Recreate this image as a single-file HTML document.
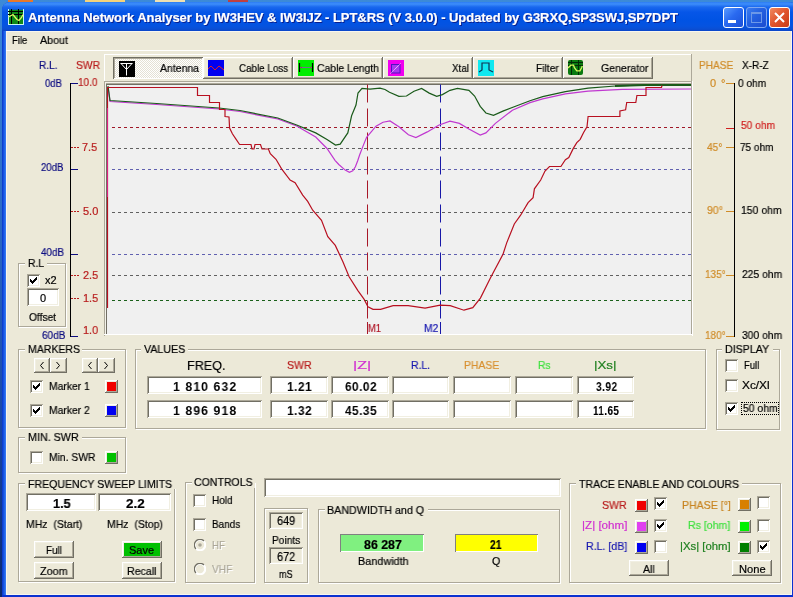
<!DOCTYPE html><html><head><meta charset="utf-8"><style>
html,body{margin:0;padding:0}
body{width:793px;height:597px;overflow:hidden;position:relative;background:linear-gradient(to bottom,#3C8AD8 0px,#2C6CC8 200px,#1A48A8 420px,#0A2870 597px)}
.a{position:absolute}
.t{position:absolute;white-space:nowrap;will-change:transform;-webkit-text-stroke:0.2px currentColor}
</style></head><body>

<div class="a" style="left:8px;top:0px;width:25px;height:2px;background:#E8782A"></div>
<div class="a" style="left:85px;top:0px;width:40px;height:2px;background:#F4D27A"></div>
<div class="a" style="left:155px;top:0px;width:30px;height:2px;background:#F0E0B0"></div>
<div class="a" style="left:228px;top:0px;width:20px;height:2px;background:#C04040"></div>
<div class="a" style="left:2px;top:2px;width:795px;height:600px;background:#0A3FD8;border-radius:8px 8px 0 0"></div>
<div class="a" style="left:2px;top:2px;width:795px;height:29px;border-radius:8px 8px 0 0;background:linear-gradient(to bottom,#2C7CF4 0px,#3D8EFB 2px,#1A68EE 5px,#0656E8 10px,#0053E4 18px,#0553E0 24px,#0A4FD4 27px,#0A45C8 29px)"></div>
<div class="a" style="left:2px;top:31px;width:4px;height:570px;background:linear-gradient(to right,#0834C8,#1E62EC 60%,#3C7FF0)"></div>
<div class="a" style="left:792px;top:31px;width:5px;height:570px;background:#0A32D0"></div>
<div class="a" style="left:2px;top:595px;width:795px;height:4px;background:#0A32D0"></div>
<div class="a" style="left:6px;top:31px;width:786px;height:564px;background:#ECE9D8"></div>
<div class="a" style="left:791px;top:31px;width:1px;height:564px;background:#F6F6F0"></div>
<div class="a" style="left:6px;top:594px;width:786px;height:1px;background:#F6F6F0"></div>
<div class="a" style="left:6px;top:31px;width:784px;height:1px;background:#F8F6EE"></div>
<div class="a" style="left:6px;top:31px;width:1px;height:564px;background:#F8F6EE"></div>
<svg class="a" style="left:8px;top:9px" width="16" height="16" viewBox="0 0 16 16">
<rect x="0" y="0" width="16" height="16" fill="#C8F4F0"/>
<rect x="1" y="1" width="14" height="14" fill="#108A18"/>
<rect x="1" y="0" width="14" height="1" fill="#0A60C0"/>
<path d="M0 2.5H15M0 5.5H15M3.5 0V15M10.5 0V15" stroke="#000" stroke-width="1"/>
<path d="M0.5 8L5 5.5L6.5 7.5L9 10.5L11 11.5L13.5 8.5L15 5.5" stroke="#E0F860" stroke-width="1.3" fill="none"/>
</svg>
<div class="t" style="left:28px;top:11px;font:bold 13px/13px 'Liberation Sans',sans-serif;color:#fff;text-shadow:1px 1px 0 #0A1E8C;letter-spacing:-0.05px">Antenna Network Analyser by IW3HEV &amp; IW3IJZ - LPT&amp;RS (V 3.0.0) - Updated by G3RXQ,SP3SWJ,SP7DPT</div>
<div class="a" style="left:723px;top:7px;width:21px;height:21px;box-sizing:border-box;border:1px solid #fff;border-radius:3px;background:linear-gradient(135deg,#5A9CFF 0%,#2A6AF0 45%,#1A50D8 100%)"></div>
<div class="a" style="left:746px;top:7px;width:21px;height:21px;box-sizing:border-box;border:1px solid #7FA8F0;border-radius:3px;background:linear-gradient(135deg,#3A7CF0 0%,#2460E0 45%,#1A4CD0 100%)"></div>
<div class="a" style="left:728px;top:20px;width:8px;height:3px;background:#fff"></div>
<div class="a" style="left:751px;top:12px;width:11px;height:11px;box-sizing:border-box;border:1px solid #6C98E8;border-top:2px solid #6C98E8"></div>
<div class="a" style="left:769px;top:7px;width:21px;height:21px;box-sizing:border-box;border:1px solid #fff;border-radius:3px;background:linear-gradient(135deg,#F08A60 0%,#E0542C 50%,#C83C18 100%)"></div>
<svg class="a" style="left:769px;top:7px" width="21" height="21"><path d="M6 6L15 15M15 6L6 15" stroke="#fff" stroke-width="2"/></svg>
<div class="t" style="left:11.70px;top:35px;font:11px/11px 'Liberation Sans',sans-serif;color:#000;transform:scaleX(0.8611);transform-origin:0 0;">File</div>
<div class="t" style="left:40.10px;top:35px;font:11px/11px 'Liberation Sans',sans-serif;color:#000;transform:scaleX(0.9724);transform-origin:0 0;">About</div>
<div class="a" style="left:6px;top:50px;width:784px;height:1px;background:#fff"></div>
<div class="a" style="left:104px;top:54px;width:588px;height:1px;background:#fff"></div>
<div class="a" style="left:104px;top:54px;width:1px;height:27px;background:#fff"></div>
<div class="a" style="left:691px;top:54px;width:1px;height:27px;background:#ACA899"></div>
<div class="a" style="left:113px;top:57px;width:90px;height:22px;background-color:#F4F3EE;background-image:repeating-conic-gradient(#fff 0 25%,#E4E1D4 0 50%);background-size:2px 2px;box-shadow:inset 1px 1px #716F64,inset -1px -1px #fff,inset 2px 2px #ACA899"></div>
<svg class="a" style="left:119px;top:61px" width="16" height="16"><rect width="16" height="16" fill="#000"/><path d="M1.5 2.5H13.5M2 2.5L7.5 8.5L13 2.5M7.5 2.5V14.5" stroke="#fff" stroke-width="1" fill="none"/></svg>
<div class="t" style="left:160.00px;top:63px;font:11px/11px 'Liberation Sans',sans-serif;color:#000;transform:scaleX(0.9524);transform-origin:0 0;">Antenna</div>
<div class="a" style="left:203px;top:57px;width:90px;height:22px;background:#ECE9D8;box-shadow:inset -1px -1px #716F64,inset 1px 1px #fff,inset -2px -2px #ACA899,inset 2px 2px #F1EFE2"></div>
<div class="t" style="left:239.00px;top:63px;font:11px/11px 'Liberation Sans',sans-serif;color:#000;transform:scaleX(0.8929);transform-origin:0 0;">Cable Loss</div>
<div class="a" style="left:293px;top:57px;width:90px;height:22px;background:#ECE9D8;box-shadow:inset -1px -1px #716F64,inset 1px 1px #fff,inset -2px -2px #ACA899,inset 2px 2px #F1EFE2"></div>
<div class="t" style="left:316.50px;top:63px;font:11px/11px 'Liberation Sans',sans-serif;color:#000;transform:scaleX(0.9470);transform-origin:0 0;">Cable Length</div>
<div class="a" style="left:383px;top:57px;width:90px;height:22px;background:#ECE9D8;box-shadow:inset -1px -1px #716F64,inset 1px 1px #fff,inset -2px -2px #ACA899,inset 2px 2px #F1EFE2"></div>
<div class="t" style="left:452.00px;top:63px;font:11px/11px 'Liberation Sans',sans-serif;color:#000;transform:scaleX(0.8947);transform-origin:0 0;">Xtal</div>
<div class="a" style="left:473px;top:57px;width:90px;height:22px;background:#ECE9D8;box-shadow:inset -1px -1px #716F64,inset 1px 1px #fff,inset -2px -2px #ACA899,inset 2px 2px #F1EFE2"></div>
<div class="t" style="left:535.60px;top:63px;font:11px/11px 'Liberation Sans',sans-serif;color:#000;transform:scaleX(0.9320);transform-origin:0 0;">Filter</div>
<div class="a" style="left:563px;top:57px;width:90px;height:22px;background:#ECE9D8;box-shadow:inset -1px -1px #716F64,inset 1px 1px #fff,inset -2px -2px #ACA899,inset 2px 2px #F1EFE2"></div>
<div class="t" style="left:601.00px;top:63px;font:11px/11px 'Liberation Sans',sans-serif;color:#000;transform:scaleX(0.9600);transform-origin:0 0;">Generator</div>
<svg class="a" style="left:208px;top:60px" width="16" height="16"><rect width="16" height="16" fill="#0000F0"/><path d="M0 9L3 6L7 10L11 6L16 10" stroke="#E02020" stroke-width="1" fill="none"/></svg>
<svg class="a" style="left:298px;top:60px" width="16" height="16"><rect width="16" height="16" fill="#00EE00"/><path d="M1.5 3V12M14.5 3V12" stroke="#000" stroke-width="1.2"/><path d="M2 7.5H14" stroke="#707090" stroke-width="1"/><path d="M2 7.5L4 6.5V8.5ZM14 7.5L12 6.5V8.5Z" fill="#A04060"/></svg>
<svg class="a" style="left:388px;top:60px" width="16" height="16"><rect width="16" height="16" fill="#F000F0"/><rect x="3.5" y="4.5" width="8.5" height="8.5" fill="#A838F0" stroke="#5010C0" stroke-width="1"/><path d="M2.5 13.5L13 3" stroke="#FFD8FF" stroke-width="1" stroke-dasharray="1 0.6"/></svg>
<svg class="a" style="left:478px;top:60px" width="16" height="16"><rect width="16" height="16" fill="#10E8F0"/><path d="M1 12L4 10V3H11V10L15 12" stroke="#103050" stroke-width="1.2" fill="none"/></svg>
<svg class="a" style="left:568px;top:60px" width="16" height="16"><rect width="15" height="15" rx="2" fill="#0A7A10"/><path d="M0 2.5H15M0 5.5H15M3.5 0V15M10.5 0V15" stroke="#032A05" stroke-width="1"/><path d="M0 8L2.8 5.2H5.6L6.4 7.6L8.8 10.9H12L13.7 7.6L14.3 6" stroke="#D8F860" stroke-width="1.3" fill="none"/></svg>
<div class="t" style="left:38.60px;top:60px;font:11px/11px 'Liberation Sans',sans-serif;color:#0C0C80;transform:scaleX(0.9200);transform-origin:0 0;">R.L.</div>
<div class="t" style="left:75.60px;top:60px;font:11px/11px 'Liberation Sans',sans-serif;color:#B81C1C;transform:scaleX(0.9385);transform-origin:0 0;">SWR</div>
<div class="a" style="left:70px;top:83px;width:1px;height:254px;background:#000"></div>
<div class="a" style="left:71px;top:83px;width:7px;height:1px;background:#0C0C80"></div>
<div class="a" style="left:71px;top:169px;width:7px;height:1px;background:#0C0C80"></div>
<div class="a" style="left:71px;top:254px;width:7px;height:1px;background:#0C0C80"></div>
<div class="a" style="left:71px;top:336px;width:7px;height:1px;background:#0C0C80"></div>
<div class="t" style="left:44.90px;top:78px;font:11px/11px 'Liberation Sans',sans-serif;color:#0C0C80;transform:scaleX(0.8650);transform-origin:0 0;">0dB</div>
<div class="t" style="left:41.00px;top:162px;font:11px/11px 'Liberation Sans',sans-serif;color:#0C0C80;transform:scaleX(0.8769);transform-origin:0 0;">20dB</div>
<div class="t" style="left:40.80px;top:246.5px;font:11px/11px 'Liberation Sans',sans-serif;color:#0C0C80;transform:scaleX(0.9000);transform-origin:0 0;">40dB</div>
<div class="t" style="left:42.40px;top:330px;font:11px/11px 'Liberation Sans',sans-serif;color:#0C0C80;transform:scaleX(0.9154);transform-origin:0 0;">60dB</div>
<div class="a" style="left:71px;top:147px;width:8px;height:1px;background:repeating-linear-gradient(to right,#B81C1C 0 2px,transparent 2px 3px)"></div>
<div class="a" style="left:71px;top:211px;width:8px;height:1px;background:repeating-linear-gradient(to right,#B81C1C 0 2px,transparent 2px 3px)"></div>
<div class="a" style="left:71px;top:275px;width:8px;height:1px;background:repeating-linear-gradient(to right,#B81C1C 0 2px,transparent 2px 3px)"></div>
<div class="a" style="left:71px;top:298px;width:8px;height:1px;background:repeating-linear-gradient(to right,#B81C1C 0 2px,transparent 2px 3px)"></div>
<div class="t" style="left:78.20px;top:77px;font:11px/11px 'Liberation Sans',sans-serif;color:#B81C1C;transform:scaleX(0.9143);transform-origin:0 0;">10.0</div>
<div class="t" style="left:82.30px;top:142px;font:11px/11px 'Liberation Sans',sans-serif;color:#B81C1C;transform:scaleX(0.9867);transform-origin:0 0;">7.5</div>
<div class="t" style="left:82.50px;top:205.5px;font:11px/11px 'Liberation Sans',sans-serif;color:#B81C1C;">5.0</div>
<div class="t" style="left:83.00px;top:270px;font:11px/11px 'Liberation Sans',sans-serif;color:#B81C1C;transform:scaleX(0.9867);transform-origin:0 0;">2.5</div>
<div class="t" style="left:83.00px;top:293px;font:11px/11px 'Liberation Sans',sans-serif;color:#B81C1C;transform:scaleX(0.9867);transform-origin:0 0;">1.5</div>
<div class="t" style="left:83.00px;top:325px;font:11px/11px 'Liberation Sans',sans-serif;color:#B81C1C;transform:scaleX(0.9867);transform-origin:0 0;">1.0</div>
<div class="t" style="left:699.00px;top:60px;font:11px/11px 'Liberation Sans',sans-serif;color:#D08C28;transform:scaleX(0.9189);transform-origin:0 0;">PHASE</div>
<div class="t" style="left:741.60px;top:60px;font:11px/11px 'Liberation Sans',sans-serif;color:#000;transform:scaleX(0.9133);transform-origin:0 0;">X-R-Z</div>
<div class="a" style="left:734px;top:83px;width:1px;height:254px;background:#000"></div>
<div class="a" style="left:726px;top:83px;width:8px;height:1px;background:#D08C28"></div>
<div class="a" style="left:726px;top:147px;width:8px;height:1px;background:#D08C28"></div>
<div class="a" style="left:726px;top:211px;width:8px;height:1px;background:#D08C28"></div>
<div class="a" style="left:726px;top:275px;width:8px;height:1px;background:#D08C28"></div>
<div class="a" style="left:726px;top:336px;width:8px;height:1px;background:#D08C28"></div>
<div class="t" style="left:710.40px;top:78px;font:11px/11px 'Liberation Sans',sans-serif;color:#D08C28;">0</div>
<div class="t" style="left:720.60px;top:78px;font:11px/11px 'Liberation Sans',sans-serif;color:#D08C28;">°</div>
<div class="t" style="left:707.10px;top:142px;font:11px/11px 'Liberation Sans',sans-serif;color:#D08C28;transform:scaleX(0.9235);transform-origin:0 0;">45°</div>
<div class="t" style="left:706.70px;top:205px;font:11px/11px 'Liberation Sans',sans-serif;color:#D08C28;transform:scaleX(0.9588);transform-origin:0 0;">90°</div>
<div class="t" style="left:705.20px;top:269px;font:11px/11px 'Liberation Sans',sans-serif;color:#D08C28;transform:scaleX(0.9130);transform-origin:0 0;">135°</div>
<div class="t" style="left:705.20px;top:330px;font:11px/11px 'Liberation Sans',sans-serif;color:#D08C28;transform:scaleX(0.9130);transform-origin:0 0;">180°</div>
<div class="t" style="left:738.40px;top:78px;font:11px/11px 'Liberation Sans',sans-serif;color:#000;transform:scaleX(0.9194);transform-origin:0 0;">0 ohm</div>
<div class="t" style="left:740.30px;top:142px;font:11px/11px 'Liberation Sans',sans-serif;color:#000;transform:scaleX(0.9108);transform-origin:0 0;">75 ohm</div>
<div class="t" style="left:741.20px;top:205px;font:11px/11px 'Liberation Sans',sans-serif;color:#000;transform:scaleX(0.9488);transform-origin:0 0;">150 ohm</div>
<div class="t" style="left:741.70px;top:269px;font:11px/11px 'Liberation Sans',sans-serif;color:#000;transform:scaleX(0.9372);transform-origin:0 0;">225 ohm</div>
<div class="t" style="left:741.70px;top:330px;font:11px/11px 'Liberation Sans',sans-serif;color:#000;transform:scaleX(0.9372);transform-origin:0 0;">300 ohm</div>
<div class="a" style="left:726px;top:128px;width:8px;height:1px;background:#D02020"></div>
<div class="t" style="left:740.60px;top:119.5px;font:11px/11px 'Liberation Sans',sans-serif;color:#D02020;transform:scaleX(0.9297);transform-origin:0 0;">50 ohm</div>
<div class="a" style="left:104px;top:81px;width:588px;height:1px;background:#ACA899"></div>
<div class="a" style="left:104px;top:81px;width:1px;height:255px;background:#ACA899"></div>
<div class="a" style="left:105px;top:82px;width:586px;height:1px;background:#F4F2EA"></div>
<div class="a" style="left:105px;top:83px;width:586px;height:1px;background:#ACA899"></div>
<div class="a" style="left:106px;top:84px;width:585px;height:1px;background:#716F64"></div>
<div class="a" style="left:106px;top:84px;width:1px;height:251px;background:#716F64"></div>
<div class="a" style="left:105px;top:82px;width:1px;height:253px;background:#F4F2EA"></div>
<div class="a" style="left:107px;top:85px;width:584px;height:249px;background:#F0F0F0"></div>
<div class="a" style="left:691px;top:81px;width:1px;height:254px;background:#ACA899"></div>
<div class="a" style="left:104px;top:334px;width:588px;height:1px;background:#fff"></div>
<div class="a" style="left:692px;top:81px;width:1px;height:255px;background:#fff"></div>
<svg class="a" style="left:0;top:0" width="793" height="597" viewBox="0 0 793 597">
<defs><clipPath id="pc"><rect x="107" y="83.5" width="584" height="250.5"/></clipPath></defs><g clip-path="url(#pc)">
<line x1="112" y1="127.5" x2="691" y2="127.5" stroke="#A01828" stroke-width="1" stroke-dasharray="3 3"/>
<line x1="112" y1="148.5" x2="691" y2="148.5" stroke="#606060" stroke-width="1" stroke-dasharray="3 3"/>
<line x1="112" y1="169.5" x2="691" y2="169.5" stroke="#6060B0" stroke-width="1" stroke-dasharray="3 3"/>
<line x1="112" y1="212.5" x2="691" y2="212.5" stroke="#606060" stroke-width="1" stroke-dasharray="3 3"/>
<line x1="112" y1="254.5" x2="691" y2="254.5" stroke="#6060B0" stroke-width="1" stroke-dasharray="3 3"/>
<line x1="112" y1="275.5" x2="691" y2="275.5" stroke="#606060" stroke-width="1" stroke-dasharray="3 3"/>
<line x1="112" y1="300.5" x2="691" y2="300.5" stroke="#1A601A" stroke-width="1" stroke-dasharray="3 3"/>
<line x1="367.5" y1="84.5" x2="367.5" y2="334" stroke="#A81828" stroke-width="1" stroke-dasharray="18 6"/>
<line x1="440.5" y1="84.5" x2="440.5" y2="334" stroke="#1818A8" stroke-width="1" stroke-dasharray="18 6"/>
<polyline points="108.0,87.0 110.0,101.5 156.7,104.5 219.0,109.0 240.0,111.5 277.8,119.0 296.7,126.0 315.7,137.0 327.0,148.5 335.0,160.3 338.8,164.5 345.2,170.1 349.4,172.4 352.8,170.9 355.4,166.7 357.7,160.7 359.6,155.0 363.0,146.1 366.6,137.3 376.0,126.2 383.0,122.2 390.0,120.9 398.9,126.8 408.4,134.7 415.9,137.6 427.3,131.9 438.6,125.3 450.0,121.1 459.4,123.4 468.9,129.1 480.2,135.1 485.9,132.9 495.4,123.4 512.4,110.2 530.0,102.6 542.7,98.9 565.4,93.9 588.1,91.2 622.2,89.4 691.0,89.0" fill="none" stroke="#C038D0" stroke-width="1.2"/>
<polyline points="108.0,86.0 110.0,100.5 156.7,103.5 219.0,108.0 240.0,110.5 277.8,118.0 296.7,125.0 315.7,132.9 327.0,139.5 335.5,145.1 340.2,144.2 347.8,132.9 351.6,115.8 356.0,105.0 358.0,93.0 362.0,88.4 370.0,89.2 380.0,88.2 385.0,89.5 389.5,92.2 398.9,96.3 406.5,96.0 414.0,91.2 421.6,88.4 429.2,93.1 436.7,96.3 442.4,94.6 450.0,90.3 457.5,88.4 468.9,90.3 474.6,96.0 480.2,106.4 485.9,113.0 493.5,115.3 502.9,111.1 516.2,106.0 530.0,100.7 542.7,96.6 565.4,91.6 588.1,88.2 615.3,86.0 644.9,85.0 691.0,85.0" fill="none" stroke="#1A5A1A" stroke-width="1.2"/>
<polyline points="615,86 645,85 691,85" fill="none" stroke="#1A5A1A" stroke-width="2"/>
<polyline points="107.5,308.0 107.5,87.5 197.5,87.5 197.5,95.5 209.5,95.5 209.5,102.5 219.5,102.5 219.5,109.5 225.0,109.5 225.0,116.5 229.0,117.0 229.6,128.0 232.4,133.8 235.8,138.9 239.6,144.5 251.0,144.5 252.0,149.0 254.0,149.0 255.0,144.5 260.5,144.5 262.0,149.0 268.4,149.0 270.3,153.7 276.0,159.3 281.6,168.8 290.1,180.0 295.1,182.6 302.7,195.1 307.7,201.4 312.7,210.2 321.5,220.3 327.8,236.6 335.3,245.4 342.9,261.7 349.1,276.8 357.9,290.6 364.2,299.4 368.0,306.9 373.0,309.4 380.6,309.4 393.1,305.7 408.2,305.7 425.1,308.2 440.2,305.2 450.2,305.7 464.0,310.2 472.8,307.7 480.4,298.1 490.4,278.0 503.0,254.2 506.7,242.9 514.3,224.0 520.6,215.2 528.1,202.7 533.1,197.6 534.4,188.8 540.7,180.0 545.0,171.0 549.5,166.5 560.9,166.5 565.4,159.7 568.8,157.5 573.3,148.4 576.8,142.7 580.2,139.3 583.6,132.5 587.0,126.8 588.1,116.5 619.9,116.5 619.9,110.9 625.6,109.8 626.7,102.5 635.8,102.5 636.9,95.5 646.0,95.5 646.0,87.5 661.5,87.5 662.0,85.5" fill="none" stroke="#B81020" stroke-width="1.2"/>
<line x1="107" y1="108" x2="107" y2="197" stroke="#E02080" stroke-width="2"/>
</g></svg>
<div class="t" style="left:368.30px;top:323px;font:11px/11px 'Liberation Sans',sans-serif;color:#B01828;transform:scaleX(0.8467);transform-origin:0 0;">M1</div>
<div class="t" style="left:424.00px;top:323px;font:11px/11px 'Liberation Sans',sans-serif;color:#1818B0;transform:scaleX(0.9333);transform-origin:0 0;">M2</div>
<div class="a" style="left:367px;top:322px;width:1px;height:12px;background:#A81828"></div>
<div class="a" style="left:440px;top:322px;width:1px;height:12px;background:#1818A8"></div>
<div class="a" style="left:19px;top:264px;width:48px;height:64px;border:1px solid #fff;box-sizing:border-box"></div>
<div class="a" style="left:18px;top:263px;width:48px;height:64px;border:1px solid #ACA899;box-sizing:border-box"></div>
<div class="a" style="left:24.6px;top:257px;width:22px;height:12px;background:#ECE9D8"></div>
<div class="t" style="left:27.60px;top:258px;font:11px/11px 'Liberation Sans',sans-serif;color:#000;transform:scaleX(0.9412);transform-origin:0 0;">R.L</div>
<div class="a" style="left:27px;top:274px;width:13px;height:13px;background:#fff;box-shadow:inset 1px 1px #ACA899,inset -1px -1px #fff,inset 2px 2px #716F64,inset -2px -2px #F1EFE2"></div>
<svg class="a" style="left:27px;top:274px" width="13" height="13"><path d="M9 3h1v1h-1zM8 4h1v1h-1zM9 4h1v1h-1zM3 5h1v1h-1zM7 5h1v1h-1zM8 5h1v1h-1zM9 5h1v1h-1zM3 6h1v1h-1zM4 6h1v1h-1zM6 6h1v1h-1zM7 6h1v1h-1zM8 6h1v1h-1zM3 7h1v1h-1zM4 7h1v1h-1zM5 7h1v1h-1zM6 7h1v1h-1zM7 7h1v1h-1zM4 8h1v1h-1zM5 8h1v1h-1zM6 8h1v1h-1zM5 9h1v1h-1z" fill="#000" shape-rendering="crispEdges"/></svg>
<div class="t" style="left:44.50px;top:275px;font:11px/11px 'Liberation Sans',sans-serif;color:#000;">x2</div>
<div class="a" style="left:27px;top:288px;width:32px;height:18px;background:#fff;box-shadow:inset 1px 1px #ACA899,inset -1px -1px #fff,inset 2px 2px #716F64,inset -2px -2px #F1EFE2"></div>
<div class="t" style="left:39.50px;top:293px;font:11px/11px 'Liberation Sans',sans-serif;color:#000;">0</div>
<div class="t" style="left:28.80px;top:312px;font:11px/11px 'Liberation Sans',sans-serif;color:#000;transform:scaleX(0.9310);transform-origin:0 0;">Offset</div>
<div class="a" style="left:19px;top:350px;width:108px;height:79px;border:1px solid #fff;box-sizing:border-box"></div>
<div class="a" style="left:18px;top:349px;width:108px;height:79px;border:1px solid #ACA899;box-sizing:border-box"></div>
<div class="a" style="left:24.8px;top:343px;width:57.7px;height:12px;background:#ECE9D8"></div>
<div class="t" style="left:27.80px;top:344px;font:11px/11px 'Liberation Sans',sans-serif;color:#000;transform:scaleX(0.9574);transform-origin:0 0;">MARKERS</div>
<div class="a" style="left:34px;top:358px;width:16px;height:15px;background:#ECE9D8;box-shadow:inset -1px -1px #716F64,inset 1px 1px #fff,inset -2px -2px #ACA899,inset 2px 2px #F1EFE2"></div>
<svg class="a" style="left:34px;top:358px" width="16" height="15"><path d="M9.5 4L6.5 7.5L9.5 11" stroke="#000" stroke-width="1" fill="none"/></svg>
<div class="a" style="left:50px;top:358px;width:17px;height:15px;background:#ECE9D8;box-shadow:inset -1px -1px #716F64,inset 1px 1px #fff,inset -2px -2px #ACA899,inset 2px 2px #F1EFE2"></div>
<svg class="a" style="left:50px;top:358px" width="17" height="15"><path d="M6.5 4L9.5 7.5L6.5 11" stroke="#000" stroke-width="1" fill="none"/></svg>
<div class="a" style="left:82px;top:358px;width:16px;height:15px;background:#ECE9D8;box-shadow:inset -1px -1px #716F64,inset 1px 1px #fff,inset -2px -2px #ACA899,inset 2px 2px #F1EFE2"></div>
<svg class="a" style="left:82px;top:358px" width="16" height="15"><path d="M9.5 4L6.5 7.5L9.5 11" stroke="#000" stroke-width="1" fill="none"/></svg>
<div class="a" style="left:98px;top:358px;width:17px;height:15px;background:#ECE9D8;box-shadow:inset -1px -1px #716F64,inset 1px 1px #fff,inset -2px -2px #ACA899,inset 2px 2px #F1EFE2"></div>
<svg class="a" style="left:98px;top:358px" width="17" height="15"><path d="M6.5 4L9.5 7.5L6.5 11" stroke="#000" stroke-width="1" fill="none"/></svg>
<div class="a" style="left:30px;top:380px;width:13px;height:13px;background:#fff;box-shadow:inset 1px 1px #ACA899,inset -1px -1px #fff,inset 2px 2px #716F64,inset -2px -2px #F1EFE2"></div>
<svg class="a" style="left:30px;top:380px" width="13" height="13"><path d="M9 3h1v1h-1zM8 4h1v1h-1zM9 4h1v1h-1zM3 5h1v1h-1zM7 5h1v1h-1zM8 5h1v1h-1zM9 5h1v1h-1zM3 6h1v1h-1zM4 6h1v1h-1zM6 6h1v1h-1zM7 6h1v1h-1zM8 6h1v1h-1zM3 7h1v1h-1zM4 7h1v1h-1zM5 7h1v1h-1zM6 7h1v1h-1zM7 7h1v1h-1zM4 8h1v1h-1zM5 8h1v1h-1zM6 8h1v1h-1zM5 9h1v1h-1z" fill="#000" shape-rendering="crispEdges"/></svg>
<div class="t" style="left:48.60px;top:381px;font:11px/11px 'Liberation Sans',sans-serif;color:#000;transform:scaleX(0.9395);transform-origin:0 0;">Marker 1</div>
<div class="a" style="left:105px;top:380px;width:13px;height:13px;background:#ECE9D8;box-shadow:inset -1px -1px #716F64,inset 1px 1px #fff,inset -2px -2px #ACA899,inset 2px 2px #F1EFE2"></div>
<div class="a" style="left:107px;top:382px;width:9px;height:9px;background:#F00000"></div>
<div class="a" style="left:30px;top:404px;width:13px;height:13px;background:#fff;box-shadow:inset 1px 1px #ACA899,inset -1px -1px #fff,inset 2px 2px #716F64,inset -2px -2px #F1EFE2"></div>
<svg class="a" style="left:30px;top:404px" width="13" height="13"><path d="M9 3h1v1h-1zM8 4h1v1h-1zM9 4h1v1h-1zM3 5h1v1h-1zM7 5h1v1h-1zM8 5h1v1h-1zM9 5h1v1h-1zM3 6h1v1h-1zM4 6h1v1h-1zM6 6h1v1h-1zM7 6h1v1h-1zM8 6h1v1h-1zM3 7h1v1h-1zM4 7h1v1h-1zM5 7h1v1h-1zM6 7h1v1h-1zM7 7h1v1h-1zM4 8h1v1h-1zM5 8h1v1h-1zM6 8h1v1h-1zM5 9h1v1h-1z" fill="#000" shape-rendering="crispEdges"/></svg>
<div class="t" style="left:48.60px;top:405px;font:11px/11px 'Liberation Sans',sans-serif;color:#000;transform:scaleX(0.9395);transform-origin:0 0;">Marker 2</div>
<div class="a" style="left:105px;top:404px;width:13px;height:13px;background:#ECE9D8;box-shadow:inset -1px -1px #716F64,inset 1px 1px #fff,inset -2px -2px #ACA899,inset 2px 2px #F1EFE2"></div>
<div class="a" style="left:107px;top:406px;width:9px;height:9px;background:#0000F0"></div>
<div class="a" style="left:19px;top:438px;width:108px;height:36px;border:1px solid #fff;box-sizing:border-box"></div>
<div class="a" style="left:18px;top:437px;width:108px;height:36px;border:1px solid #ACA899;box-sizing:border-box"></div>
<div class="a" style="left:24.8px;top:431px;width:56.8px;height:12px;background:#ECE9D8"></div>
<div class="t" style="left:27.80px;top:432px;font:11px/11px 'Liberation Sans',sans-serif;color:#000;transform:scaleX(0.9769);transform-origin:0 0;">MIN. SWR</div>
<div class="a" style="left:30px;top:451px;width:13px;height:13px;background:#fff;box-shadow:inset 1px 1px #ACA899,inset -1px -1px #fff,inset 2px 2px #716F64,inset -2px -2px #F1EFE2"></div>
<div class="t" style="left:48.60px;top:452px;font:11px/11px 'Liberation Sans',sans-serif;color:#000;transform:scaleX(0.9400);transform-origin:0 0;">Min. SWR</div>
<div class="a" style="left:105px;top:451px;width:13px;height:13px;background:#ECE9D8;box-shadow:inset -1px -1px #716F64,inset 1px 1px #fff,inset -2px -2px #ACA899,inset 2px 2px #F1EFE2"></div>
<div class="a" style="left:107px;top:453px;width:9px;height:9px;background:#00C000"></div>
<div class="a" style="left:136px;top:350px;width:571px;height:80px;border:1px solid #fff;box-sizing:border-box"></div>
<div class="a" style="left:135px;top:349px;width:571px;height:80px;border:1px solid #ACA899;box-sizing:border-box"></div>
<div class="a" style="left:140.9px;top:343px;width:47.6px;height:12px;background:#ECE9D8"></div>
<div class="t" style="left:143.90px;top:344px;font:11px/11px 'Liberation Sans',sans-serif;color:#000;transform:scaleX(0.9674);transform-origin:0 0;">VALUES</div>
<div class="t" style="left:187.40px;top:359px;font:13px/13px 'Liberation Sans',sans-serif;color:#000;transform:scaleX(0.9700);transform-origin:0 0;">FREQ.</div>
<div class="t" style="left:286.50px;top:360px;font:11px/11px 'Liberation Sans',sans-serif;color:#B81C1C;transform:scaleX(0.9615);transform-origin:0 0;">SWR</div>
<div class="t" style="left:353.30px;top:360px;font:11px/11px 'Liberation Sans',sans-serif;color:#D030D0;transform:scaleX(1.4583);transform-origin:0 0;">|Z|</div>
<div class="t" style="left:411.30px;top:360px;font:11px/11px 'Liberation Sans',sans-serif;color:#1818B0;transform:scaleX(0.9500);transform-origin:0 0;">R.L.</div>
<div class="t" style="left:464.00px;top:360px;font:11px/11px 'Liberation Sans',sans-serif;color:#D89030;transform:scaleX(0.9459);transform-origin:0 0;">PHASE</div>
<div class="t" style="left:538.00px;top:360px;font:11px/11px 'Liberation Sans',sans-serif;color:#40E040;transform:scaleX(0.9286);transform-origin:0 0;">Rs</div>
<div class="t" style="left:593.60px;top:360px;font:11px/11px 'Liberation Sans',sans-serif;color:#208020;transform:scaleX(1.2105);transform-origin:0 0;">|Xs|</div>
<div class="a" style="left:147px;top:376px;width:115px;height:18px;background:#fff;box-shadow:inset 1px 1px #ACA899,inset -1px -1px #fff,inset 2px 2px #716F64,inset -2px -2px #F1EFE2"></div>
<div class="a" style="left:270px;top:376px;width:58px;height:18px;background:#fff;box-shadow:inset 1px 1px #ACA899,inset -1px -1px #fff,inset 2px 2px #716F64,inset -2px -2px #F1EFE2"></div>
<div class="a" style="left:331px;top:376px;width:58px;height:18px;background:#fff;box-shadow:inset 1px 1px #ACA899,inset -1px -1px #fff,inset 2px 2px #716F64,inset -2px -2px #F1EFE2"></div>
<div class="a" style="left:392px;top:376px;width:57px;height:18px;background:#fff;box-shadow:inset 1px 1px #ACA899,inset -1px -1px #fff,inset 2px 2px #716F64,inset -2px -2px #F1EFE2"></div>
<div class="a" style="left:453px;top:376px;width:58px;height:18px;background:#fff;box-shadow:inset 1px 1px #ACA899,inset -1px -1px #fff,inset 2px 2px #716F64,inset -2px -2px #F1EFE2"></div>
<div class="a" style="left:515px;top:376px;width:58px;height:18px;background:#fff;box-shadow:inset 1px 1px #ACA899,inset -1px -1px #fff,inset 2px 2px #716F64,inset -2px -2px #F1EFE2"></div>
<div class="a" style="left:577px;top:376px;width:57px;height:18px;background:#fff;box-shadow:inset 1px 1px #ACA899,inset -1px -1px #fff,inset 2px 2px #716F64,inset -2px -2px #F1EFE2"></div>
<div class="a" style="left:147px;top:400px;width:115px;height:18px;background:#fff;box-shadow:inset 1px 1px #ACA899,inset -1px -1px #fff,inset 2px 2px #716F64,inset -2px -2px #F1EFE2"></div>
<div class="a" style="left:270px;top:400px;width:58px;height:18px;background:#fff;box-shadow:inset 1px 1px #ACA899,inset -1px -1px #fff,inset 2px 2px #716F64,inset -2px -2px #F1EFE2"></div>
<div class="a" style="left:331px;top:400px;width:58px;height:18px;background:#fff;box-shadow:inset 1px 1px #ACA899,inset -1px -1px #fff,inset 2px 2px #716F64,inset -2px -2px #F1EFE2"></div>
<div class="a" style="left:392px;top:400px;width:57px;height:18px;background:#fff;box-shadow:inset 1px 1px #ACA899,inset -1px -1px #fff,inset 2px 2px #716F64,inset -2px -2px #F1EFE2"></div>
<div class="a" style="left:453px;top:400px;width:58px;height:18px;background:#fff;box-shadow:inset 1px 1px #ACA899,inset -1px -1px #fff,inset 2px 2px #716F64,inset -2px -2px #F1EFE2"></div>
<div class="a" style="left:515px;top:400px;width:58px;height:18px;background:#fff;box-shadow:inset 1px 1px #ACA899,inset -1px -1px #fff,inset 2px 2px #716F64,inset -2px -2px #F1EFE2"></div>
<div class="a" style="left:577px;top:400px;width:57px;height:18px;background:#fff;box-shadow:inset 1px 1px #ACA899,inset -1px -1px #fff,inset 2px 2px #716F64,inset -2px -2px #F1EFE2"></div>
<div class="t" style="left:173.35px;top:379.5px;font:bold 13px/13px 'Liberation Sans',sans-serif;color:#000;transform:scaleX(0.9364);transform-origin:0 0;-webkit-text-stroke:0;letter-spacing:1.2px;">1 810 632</div>
<div class="t" style="left:287.25px;top:379.5px;font:bold 13px/13px 'Liberation Sans',sans-serif;color:#000;transform:scaleX(0.9142);transform-origin:0 0;-webkit-text-stroke:0;letter-spacing:0.6px;">1.21</div>
<div class="t" style="left:344.50px;top:379.5px;font:bold 13px/13px 'Liberation Sans',sans-serif;color:#000;transform:scaleX(0.9040);transform-origin:0 0;-webkit-text-stroke:0;letter-spacing:0.6px;">60.02</div>
<div class="t" style="left:595.50px;top:379.5px;font:bold 13px/13px 'Liberation Sans',sans-serif;color:#000;transform:scaleX(0.7836);transform-origin:0 0;-webkit-text-stroke:0;letter-spacing:0.6px;">3.92</div>
<div class="t" style="left:173.35px;top:403.5px;font:bold 13px/13px 'Liberation Sans',sans-serif;color:#000;transform:scaleX(0.9364);transform-origin:0 0;-webkit-text-stroke:0;letter-spacing:1.2px;">1 896 918</div>
<div class="t" style="left:287.25px;top:403.5px;font:bold 13px/13px 'Liberation Sans',sans-serif;color:#000;transform:scaleX(0.9142);transform-origin:0 0;-webkit-text-stroke:0;letter-spacing:0.6px;">1.32</div>
<div class="t" style="left:344.50px;top:403.5px;font:bold 13px/13px 'Liberation Sans',sans-serif;color:#000;transform:scaleX(0.9040);transform-origin:0 0;-webkit-text-stroke:0;letter-spacing:0.6px;">45.35</div>
<div class="t" style="left:593.00px;top:403.5px;font:bold 13px/13px 'Liberation Sans',sans-serif;color:#000;transform:scaleX(0.7558);transform-origin:0 0;-webkit-text-stroke:0;letter-spacing:0.6px;">11.65</div>
<div class="a" style="left:717px;top:350px;width:64px;height:81px;border:1px solid #fff;box-sizing:border-box"></div>
<div class="a" style="left:716px;top:349px;width:64px;height:81px;border:1px solid #ACA899;box-sizing:border-box"></div>
<div class="a" style="left:722px;top:343px;width:50.5px;height:12px;background:#ECE9D8"></div>
<div class="t" style="left:725.00px;top:344px;font:11px/11px 'Liberation Sans',sans-serif;color:#000;transform:scaleX(0.9674);transform-origin:0 0;">DISPLAY</div>
<div class="a" style="left:725px;top:359px;width:13px;height:13px;background:#fff;box-shadow:inset 1px 1px #ACA899,inset -1px -1px #fff,inset 2px 2px #716F64,inset -2px -2px #F1EFE2"></div>
<div class="t" style="left:743.50px;top:360px;font:11px/11px 'Liberation Sans',sans-serif;color:#000;transform:scaleX(0.8611);transform-origin:0 0;">Full</div>
<div class="a" style="left:725px;top:379px;width:13px;height:13px;background:#fff;box-shadow:inset 1px 1px #ACA899,inset -1px -1px #fff,inset 2px 2px #716F64,inset -2px -2px #F1EFE2"></div>
<div class="t" style="left:742.00px;top:380px;font:11px/11px 'Liberation Sans',sans-serif;color:#000;transform:scaleX(1.0769);transform-origin:0 0;">Xc/Xl</div>
<div class="a" style="left:725px;top:402px;width:13px;height:13px;background:#fff;box-shadow:inset 1px 1px #ACA899,inset -1px -1px #fff,inset 2px 2px #716F64,inset -2px -2px #F1EFE2"></div>
<svg class="a" style="left:725px;top:402px" width="13" height="13"><path d="M9 3h1v1h-1zM8 4h1v1h-1zM9 4h1v1h-1zM3 5h1v1h-1zM7 5h1v1h-1zM8 5h1v1h-1zM9 5h1v1h-1zM3 6h1v1h-1zM4 6h1v1h-1zM6 6h1v1h-1zM7 6h1v1h-1zM8 6h1v1h-1zM3 7h1v1h-1zM4 7h1v1h-1zM5 7h1v1h-1zM6 7h1v1h-1zM7 7h1v1h-1zM4 8h1v1h-1zM5 8h1v1h-1zM6 8h1v1h-1zM5 9h1v1h-1z" fill="#000" shape-rendering="crispEdges"/></svg>
<div class="t" style="left:743.00px;top:403px;font:11px/11px 'Liberation Sans',sans-serif;color:#000;transform:scaleX(0.9459);transform-origin:0 0;">50 ohm</div>
<div class="a" style="left:741px;top:402px;width:38px;height:13px;box-sizing:border-box;border:1px dotted #000"></div>
<div class="a" style="left:19px;top:484px;width:157px;height:99px;border:1px solid #fff;box-sizing:border-box"></div>
<div class="a" style="left:18px;top:483px;width:157px;height:99px;border:1px solid #ACA899;box-sizing:border-box"></div>
<div class="a" style="left:25px;top:478px;width:151px;height:11px;background:#ECE9D8"></div>
<div class="t" style="left:27.90px;top:479px;font:11px/11px 'Liberation Sans',sans-serif;color:#000;transform:scaleX(0.9613);transform-origin:0 0;">FREQUENCY SWEEP LIMITS</div>
<div class="a" style="left:26px;top:493px;width:70px;height:18px;background:#fff;box-shadow:inset 1px 1px #ACA899,inset -1px -1px #fff,inset 2px 2px #716F64,inset -2px -2px #F1EFE2"></div>
<div class="a" style="left:98px;top:493px;width:73px;height:18px;background:#fff;box-shadow:inset 1px 1px #ACA899,inset -1px -1px #fff,inset 2px 2px #716F64,inset -2px -2px #F1EFE2"></div>
<div class="t" style="left:52.70px;top:496.5px;font:bold 13px/13px 'Liberation Sans',sans-serif;color:#000;transform:scaleX(0.9778);transform-origin:0 0;">1.5</div>
<div class="t" style="left:125.65px;top:496.5px;font:bold 13px/13px 'Liberation Sans',sans-serif;color:#000;transform:scaleX(1.0389);transform-origin:0 0;">2.2</div>
<div class="t" style="left:26.40px;top:519px;font:11px/11px 'Liberation Sans',sans-serif;color:#000;transform:scaleX(0.9525);transform-origin:0 0;">MHz&nbsp;&nbsp;(Start)</div>
<div class="t" style="left:106.50px;top:519px;font:11px/11px 'Liberation Sans',sans-serif;color:#000;transform:scaleX(0.9525);transform-origin:0 0;">MHz&nbsp;&nbsp;(Stop)</div>
<div class="a" style="left:34px;top:541px;width:40px;height:17px;background:#ECE9D8;box-shadow:inset -1px -1px #716F64,inset 1px 1px #fff,inset -2px -2px #ACA899,inset 2px 2px #F1EFE2"></div>
<div class="t" style="left:46.20px;top:544.5px;font:11px/11px 'Liberation Sans',sans-serif;color:#000;transform:scaleX(0.9000);transform-origin:0 0;">Full</div>
<div class="a" style="left:34px;top:562px;width:40px;height:17px;background:#ECE9D8;box-shadow:inset -1px -1px #716F64,inset 1px 1px #fff,inset -2px -2px #ACA899,inset 2px 2px #F1EFE2"></div>
<div class="t" style="left:39.50px;top:565.5px;font:11px/11px 'Liberation Sans',sans-serif;color:#000;transform:scaleX(0.9821);transform-origin:0 0;">Zoom</div>
<div class="a" style="left:122px;top:541px;width:40px;height:17px;background:#ECE9D8;box-shadow:inset -1px -1px #716F64,inset 1px 1px #fff,inset -2px -2px #ACA899,inset 2px 2px #F1EFE2"></div>
<div class="a" style="left:124px;top:543px;width:36px;height:13px;background:#00C000"></div>
<div class="t" style="left:129.40px;top:544.5px;font:11px/11px 'Liberation Sans',sans-serif;color:#000;">Save</div>
<div class="a" style="left:122px;top:562px;width:40px;height:17px;background:#ECE9D8;box-shadow:inset -1px -1px #716F64,inset 1px 1px #fff,inset -2px -2px #ACA899,inset 2px 2px #F1EFE2"></div>
<div class="t" style="left:127.40px;top:565.5px;font:11px/11px 'Liberation Sans',sans-serif;color:#000;transform:scaleX(0.9677);transform-origin:0 0;">Recall</div>
<div class="a" style="left:186px;top:483px;width:70px;height:101px;border:1px solid #fff;box-sizing:border-box"></div>
<div class="a" style="left:185px;top:482px;width:70px;height:101px;border:1px solid #ACA899;box-sizing:border-box"></div>
<div class="a" style="left:192px;top:477px;width:63px;height:11px;background:#ECE9D8"></div>
<div class="t" style="left:194.40px;top:477px;font:11px/11px 'Liberation Sans',sans-serif;color:#000;transform:scaleX(0.9590);transform-origin:0 0;">CONTROLS</div>
<div class="a" style="left:193px;top:494px;width:13px;height:13px;background:#fff;box-shadow:inset 1px 1px #ACA899,inset -1px -1px #fff,inset 2px 2px #716F64,inset -2px -2px #F1EFE2"></div>
<div class="t" style="left:212.00px;top:495px;font:11px/11px 'Liberation Sans',sans-serif;color:#000;transform:scaleX(0.9130);transform-origin:0 0;">Hold</div>
<div class="a" style="left:193px;top:518px;width:13px;height:13px;background:#fff;box-shadow:inset 1px 1px #ACA899,inset -1px -1px #fff,inset 2px 2px #716F64,inset -2px -2px #F1EFE2"></div>
<div class="t" style="left:212.00px;top:518.5px;font:11px/11px 'Liberation Sans',sans-serif;color:#000;transform:scaleX(0.9062);transform-origin:0 0;">Bands</div>
<svg class="a" style="left:194px;top:539px" width="12" height="12" viewBox="0 0 12 12">
<circle cx="6" cy="6" r="5.5" fill="#fff"/>
<path d="M10 2A5.5 5.5 0 0 0 2 10" stroke="#716F64" stroke-width="1.3" fill="none"/>
<path d="M2 10A5.5 5.5 0 0 0 10 2" stroke="#FFFFFF" stroke-width="1.3" fill="none"/>
<circle cx="6" cy="6" r="4.2" fill="#ECE9D8"/>
<circle cx="6" cy="6" r="1.8" fill="#ACA899"/>
</svg>
<svg class="a" style="left:194px;top:563px" width="12" height="12" viewBox="0 0 12 12">
<circle cx="6" cy="6" r="5.5" fill="#fff"/>
<path d="M10 2A5.5 5.5 0 0 0 2 10" stroke="#716F64" stroke-width="1.3" fill="none"/>
<path d="M2 10A5.5 5.5 0 0 0 10 2" stroke="#FFFFFF" stroke-width="1.3" fill="none"/>
<circle cx="6" cy="6" r="4.2" fill="#ECE9D8"/>

</svg>
<div class="t" style="left:212.50px;top:541px;font:11px/11px 'Liberation Sans',sans-serif;color:#fff;transform:scaleX(0.8800);transform-origin:0 0;">HF</div>
<div class="t" style="left:211.50px;top:540px;font:11px/11px 'Liberation Sans',sans-serif;color:#ACA899;transform:scaleX(0.8800);transform-origin:0 0;">HF</div>
<div class="t" style="left:212.50px;top:565px;font:11px/11px 'Liberation Sans',sans-serif;color:#fff;transform:scaleX(0.9227);transform-origin:0 0;">VHF</div>
<div class="t" style="left:211.50px;top:564px;font:11px/11px 'Liberation Sans',sans-serif;color:#ACA899;transform:scaleX(0.9227);transform-origin:0 0;">VHF</div>
<div class="a" style="left:264px;top:478px;width:297px;height:19px;background:#fff;box-shadow:inset 1px 1px #ACA899,inset -1px -1px #fff,inset 2px 2px #716F64,inset -2px -2px #F1EFE2"></div>
<div class="a" style="left:265px;top:509px;width:44px;height:75px;border:1px solid #fff;box-sizing:border-box"></div>
<div class="a" style="left:264px;top:508px;width:44px;height:75px;border:1px solid #ACA899;box-sizing:border-box"></div>
<div class="a" style="left:269px;top:512px;width:34px;height:17px;background:#ECE9D8;box-shadow:inset 1px 1px #ACA899,inset -1px -1px #fff,inset 2px 2px #716F64,inset -2px -2px #F1EFE2"></div>
<div class="t" style="left:277.00px;top:515px;font:12px/12px 'Liberation Sans',sans-serif;color:#000;transform:scaleX(0.9100);transform-origin:0 0;">649</div>
<div class="t" style="left:271.50px;top:534.5px;font:11px/11px 'Liberation Sans',sans-serif;color:#000;transform:scaleX(0.9258);transform-origin:0 0;">Points</div>
<div class="a" style="left:269px;top:547px;width:34px;height:17px;background:#ECE9D8;box-shadow:inset 1px 1px #ACA899,inset -1px -1px #fff,inset 2px 2px #716F64,inset -2px -2px #F1EFE2"></div>
<div class="t" style="left:277.00px;top:551px;font:12px/12px 'Liberation Sans',sans-serif;color:#000;transform:scaleX(0.9100);transform-origin:0 0;">672</div>
<div class="t" style="left:278.70px;top:568.5px;font:11px/11px 'Liberation Sans',sans-serif;color:#000;transform:scaleX(0.8235);transform-origin:0 0;">mS</div>
<div class="a" style="left:319px;top:510px;width:242px;height:74px;border:1px solid #fff;box-sizing:border-box"></div>
<div class="a" style="left:318px;top:509px;width:242px;height:74px;border:1px solid #ACA899;box-sizing:border-box"></div>
<div class="a" style="left:325px;top:504px;width:103px;height:11px;background:#ECE9D8"></div>
<div class="t" style="left:327.00px;top:504.5px;font:11px/11px 'Liberation Sans',sans-serif;color:#000;transform:scaleX(0.9750);transform-origin:0 0;">BANDWIDTH and Q</div>
<div class="a" style="left:340px;top:534px;width:84px;height:18px;background:#80F080;box-shadow:inset 1px 1px #808080,inset -1px -1px #fff"></div>
<div class="t" style="left:363.50px;top:538.5px;font:bold 12px/12px 'Liberation Sans',sans-serif;color:#000;transform:scaleX(1.0324);transform-origin:0 0;">86 287</div>
<div class="t" style="left:358.10px;top:555.5px;font:11px/11px 'Liberation Sans',sans-serif;color:#000;transform:scaleX(0.9863);transform-origin:0 0;">Bandwidth</div>
<div class="a" style="left:455px;top:534px;width:83px;height:18px;background:#FFFF00;box-shadow:inset 1px 1px #808080,inset -1px -1px #fff"></div>
<div class="t" style="left:490.00px;top:538.5px;font:bold 12px/12px 'Liberation Sans',sans-serif;color:#000;transform:scaleX(0.8571);transform-origin:0 0;">21</div>
<div class="t" style="left:492.00px;top:555.5px;font:11px/11px 'Liberation Sans',sans-serif;color:#000;transform:scaleX(0.9667);transform-origin:0 0;">Q</div>
<div class="a" style="left:570px;top:484px;width:212px;height:100px;border:1px solid #fff;box-sizing:border-box"></div>
<div class="a" style="left:569px;top:483px;width:212px;height:100px;border:1px solid #ACA899;box-sizing:border-box"></div>
<div class="a" style="left:576px;top:478px;width:166px;height:11px;background:#ECE9D8"></div>
<div class="t" style="left:578.80px;top:478.5px;font:11px/11px 'Liberation Sans',sans-serif;color:#000;transform:scaleX(0.9593);transform-origin:0 0;">TRACE ENABLE AND COLOURS</div>
<div class="t" style="left:601.50px;top:500px;font:11px/11px 'Liberation Sans',sans-serif;color:#B81C1C;transform:scaleX(0.9615);transform-origin:0 0;">SWR</div>
<div class="a" style="left:635px;top:499px;width:13px;height:13px;background:#ECE9D8;box-shadow:inset -1px -1px #716F64,inset 1px 1px #fff,inset -2px -2px #ACA899,inset 2px 2px #F1EFE2"></div>
<div class="a" style="left:637px;top:501px;width:9px;height:9px;background:#F00000"></div>
<div class="a" style="left:654px;top:497px;width:13px;height:13px;background:#fff;box-shadow:inset 1px 1px #ACA899,inset -1px -1px #fff,inset 2px 2px #716F64,inset -2px -2px #F1EFE2"></div>
<svg class="a" style="left:654px;top:497px" width="13" height="13"><path d="M9 3h1v1h-1zM8 4h1v1h-1zM9 4h1v1h-1zM3 5h1v1h-1zM7 5h1v1h-1zM8 5h1v1h-1zM9 5h1v1h-1zM3 6h1v1h-1zM4 6h1v1h-1zM6 6h1v1h-1zM7 6h1v1h-1zM8 6h1v1h-1zM3 7h1v1h-1zM4 7h1v1h-1zM5 7h1v1h-1zM6 7h1v1h-1zM7 7h1v1h-1zM4 8h1v1h-1zM5 8h1v1h-1zM6 8h1v1h-1zM5 9h1v1h-1z" fill="#000" shape-rendering="crispEdges"/></svg>
<div class="t" style="left:681.50px;top:499.5px;font:11px/11px 'Liberation Sans',sans-serif;color:#C88420;transform:scaleX(0.9608);transform-origin:0 0;">PHASE [°]</div>
<div class="a" style="left:738px;top:498px;width:13px;height:13px;background:#ECE9D8;box-shadow:inset -1px -1px #716F64,inset 1px 1px #fff,inset -2px -2px #ACA899,inset 2px 2px #F1EFE2"></div>
<div class="a" style="left:740px;top:500px;width:9px;height:9px;background:#D88000"></div>
<div class="a" style="left:757px;top:496px;width:13px;height:13px;background:#fff;box-shadow:inset 1px 1px #ACA899,inset -1px -1px #fff,inset 2px 2px #716F64,inset -2px -2px #F1EFE2"></div>
<div class="t" style="left:581.50px;top:520px;font:11px/11px 'Liberation Sans',sans-serif;color:#D030D0;transform:scaleX(1.0581);transform-origin:0 0;">|Z| [ohm]</div>
<div class="a" style="left:635px;top:520px;width:13px;height:13px;background:#ECE9D8;box-shadow:inset -1px -1px #716F64,inset 1px 1px #fff,inset -2px -2px #ACA899,inset 2px 2px #F1EFE2"></div>
<div class="a" style="left:637px;top:522px;width:9px;height:9px;background:#E040F0"></div>
<div class="a" style="left:654px;top:519px;width:13px;height:13px;background:#fff;box-shadow:inset 1px 1px #ACA899,inset -1px -1px #fff,inset 2px 2px #716F64,inset -2px -2px #F1EFE2"></div>
<svg class="a" style="left:654px;top:519px" width="13" height="13"><path d="M9 3h1v1h-1zM8 4h1v1h-1zM9 4h1v1h-1zM3 5h1v1h-1zM7 5h1v1h-1zM8 5h1v1h-1zM9 5h1v1h-1zM3 6h1v1h-1zM4 6h1v1h-1zM6 6h1v1h-1zM7 6h1v1h-1zM8 6h1v1h-1zM3 7h1v1h-1zM4 7h1v1h-1zM5 7h1v1h-1zM6 7h1v1h-1zM7 7h1v1h-1zM4 8h1v1h-1zM5 8h1v1h-1zM6 8h1v1h-1zM5 9h1v1h-1z" fill="#000" shape-rendering="crispEdges"/></svg>
<div class="t" style="left:688.30px;top:520px;font:11px/11px 'Liberation Sans',sans-serif;color:#40E040;transform:scaleX(0.9591);transform-origin:0 0;">Rs [ohm]</div>
<div class="a" style="left:738px;top:520px;width:13px;height:13px;background:#ECE9D8;box-shadow:inset -1px -1px #716F64,inset 1px 1px #fff,inset -2px -2px #ACA899,inset 2px 2px #F1EFE2"></div>
<div class="a" style="left:740px;top:522px;width:9px;height:9px;background:#00F000"></div>
<div class="a" style="left:757px;top:519px;width:13px;height:13px;background:#fff;box-shadow:inset 1px 1px #ACA899,inset -1px -1px #fff,inset 2px 2px #716F64,inset -2px -2px #F1EFE2"></div>
<div class="t" style="left:585.60px;top:541px;font:11px/11px 'Liberation Sans',sans-serif;color:#1818B0;transform:scaleX(0.9628);transform-origin:0 0;">R.L. [dB]</div>
<div class="a" style="left:635px;top:541px;width:13px;height:13px;background:#ECE9D8;box-shadow:inset -1px -1px #716F64,inset 1px 1px #fff,inset -2px -2px #ACA899,inset 2px 2px #F1EFE2"></div>
<div class="a" style="left:637px;top:543px;width:9px;height:9px;background:#0000F0"></div>
<div class="a" style="left:654px;top:540px;width:13px;height:13px;background:#fff;box-shadow:inset 1px 1px #ACA899,inset -1px -1px #fff,inset 2px 2px #716F64,inset -2px -2px #F1EFE2"></div>
<div class="t" style="left:679.90px;top:541px;font:11px/11px 'Liberation Sans',sans-serif;color:#208020;transform:scaleX(1.0327);transform-origin:0 0;">|Xs| [ohm]</div>
<div class="a" style="left:738px;top:541px;width:13px;height:13px;background:#ECE9D8;box-shadow:inset -1px -1px #716F64,inset 1px 1px #fff,inset -2px -2px #ACA899,inset 2px 2px #F1EFE2"></div>
<div class="a" style="left:740px;top:543px;width:9px;height:9px;background:#008000"></div>
<div class="a" style="left:757px;top:540px;width:13px;height:13px;background:#fff;box-shadow:inset 1px 1px #ACA899,inset -1px -1px #fff,inset 2px 2px #716F64,inset -2px -2px #F1EFE2"></div>
<svg class="a" style="left:757px;top:540px" width="13" height="13"><path d="M9 3h1v1h-1zM8 4h1v1h-1zM9 4h1v1h-1zM3 5h1v1h-1zM7 5h1v1h-1zM8 5h1v1h-1zM9 5h1v1h-1zM3 6h1v1h-1zM4 6h1v1h-1zM6 6h1v1h-1zM7 6h1v1h-1zM8 6h1v1h-1zM3 7h1v1h-1zM4 7h1v1h-1zM5 7h1v1h-1zM6 7h1v1h-1zM7 7h1v1h-1zM4 8h1v1h-1zM5 8h1v1h-1zM6 8h1v1h-1zM5 9h1v1h-1z" fill="#000" shape-rendering="crispEdges"/></svg>
<div class="a" style="left:629px;top:560px;width:40px;height:16px;background:#ECE9D8;box-shadow:inset -1px -1px #716F64,inset 1px 1px #fff,inset -2px -2px #ACA899,inset 2px 2px #F1EFE2"></div>
<div class="t" style="left:643.00px;top:564px;font:11px/11px 'Liberation Sans',sans-serif;color:#000;transform:scaleX(0.9583);transform-origin:0 0;">All</div>
<div class="a" style="left:732px;top:560px;width:40px;height:16px;background:#ECE9D8;box-shadow:inset -1px -1px #716F64,inset 1px 1px #fff,inset -2px -2px #ACA899,inset 2px 2px #F1EFE2"></div>
<div class="t" style="left:739.20px;top:564px;font:11px/11px 'Liberation Sans',sans-serif;color:#000;transform:scaleX(1.0115);transform-origin:0 0;">None</div>
</body></html>
